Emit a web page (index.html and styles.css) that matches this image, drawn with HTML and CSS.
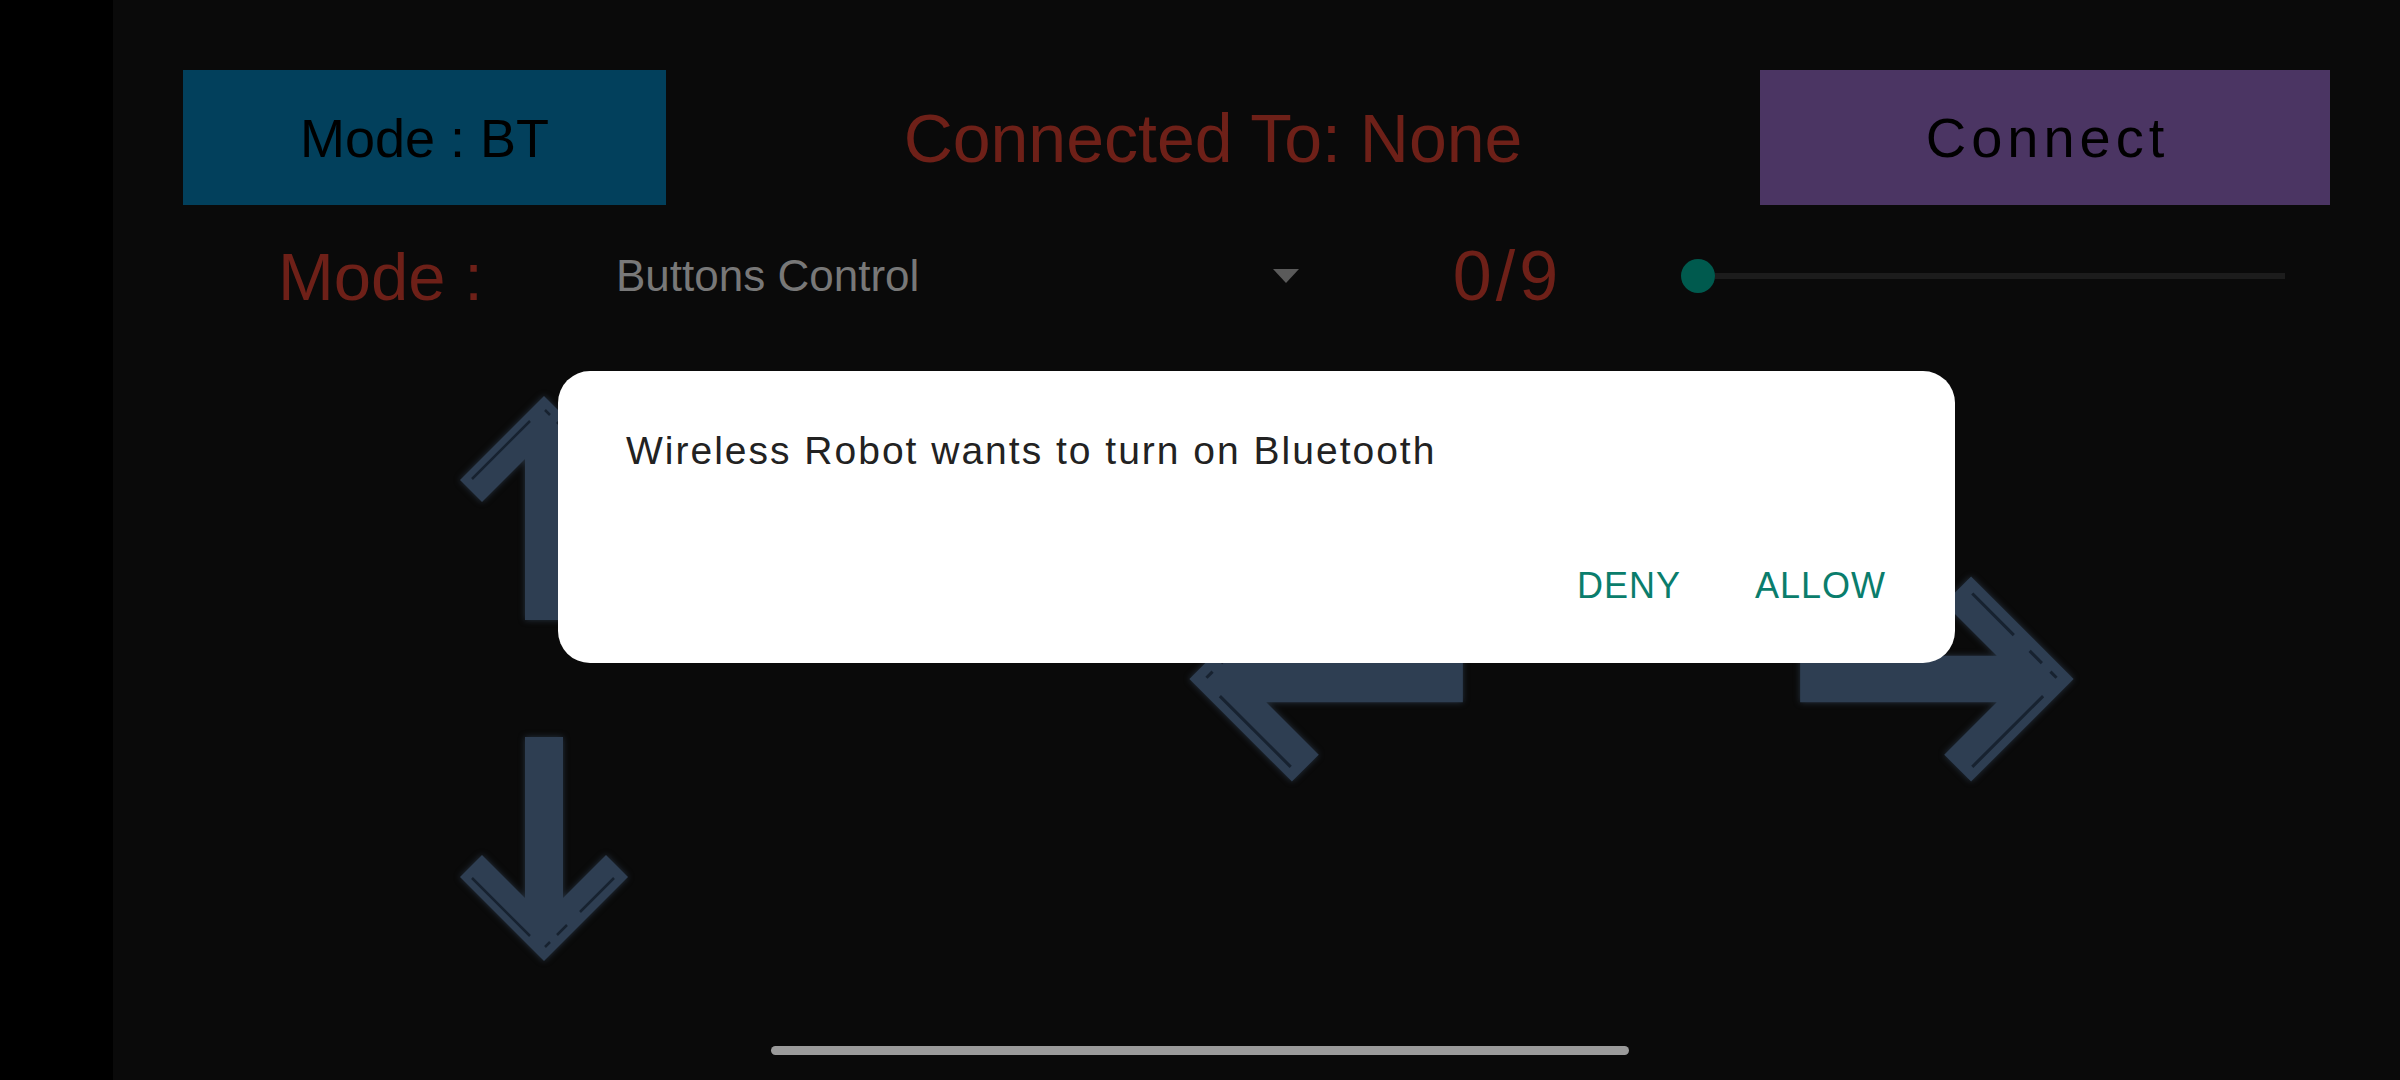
FILE: index.html
```html
<!DOCTYPE html>
<html lang="en">
<head>
<meta charset="utf-8">
<title>Wireless Robot</title>
<link rel="stylesheet" href="styles.css">
</head>
<body>
<div class="screen">
  <div class="cutout"></div>
  <main class="app">
    <div class="top-row">
      <div class="btn btn-mode">Mode : BT</div>
      <div class="status">Connected To: None</div>
      <div class="btn btn-connect">Connect</div>
    </div>
    <div class="mode-row">
      <div class="mode-label">Mode :</div>
      <div class="spinner">
        <span class="spinner-text">Buttons Control</span>
        <span class="spinner-caret"></span>
      </div>
      <div class="speed">0/9</div>
      <div class="seekbar">
        <span class="thumb"></span>
        <span class="track"></span>
      </div>
    </div>
    <div class="pad">
      <svg class="arrow arrow-up" viewBox="0 0 172 225" aria-label="Up">
        <path class="fill" d="M67,0 H105 V161 L148,118 L170,140 L86,224 L2,140 L24,118 L67,161 Z"/>
        <path class="line" d="M14,141 L72,199 M156,141 L122,175 M109,188 L99,198 M92,205 L87,210"/>
      </svg>
      <svg class="arrow arrow-down" viewBox="0 0 172 225" aria-label="Down">
        <path class="fill" d="M67,0 H105 V161 L148,118 L170,140 L86,224 L2,140 L24,118 L67,161 Z"/>
        <path class="line" d="M14,141 L72,199 M156,141 L122,175 M109,188 L99,198 M92,205 L87,210"/>
      </svg>
      <svg class="arrow arrow-left" viewBox="0 0 225 172" aria-label="Left">
        <g transform="translate(0,172) rotate(-90)">
          <path class="fill" d="M67,0 H105 V161 L148,118 L170,140 L86,224 L2,140 L24,118 L67,161 Z"/>
          <path class="line" d="M14,141 L72,199 M156,141 L122,175 M109,188 L99,198 M92,205 L87,210"/>
        </g>
      </svg>
      <svg class="arrow arrow-right" viewBox="0 0 225 172" aria-label="Right">
        <g transform="translate(0,172) rotate(-90)">
          <path class="fill" d="M67,0 H105 V161 L148,118 L170,140 L86,224 L2,140 L24,118 L67,161 Z"/>
          <path class="line" d="M14,141 L72,199 M156,141 L122,175 M109,188 L99,198 M92,205 L87,210"/>
        </g>
      </svg>
    </div>
  </main>
</div>

<div class="scrim">
  <div class="dialog" role="dialog">
    <p class="dialog-msg">Wireless Robot wants to turn on Bluetooth</p>
    <div class="dialog-actions">
      <span class="dialog-btn">DENY</span>
      <span class="dialog-btn">ALLOW</span>
    </div>
  </div>
</div>

<div class="nav-handle"></div>
</body>
</html>
```
FILE: styles.css
```css
* { box-sizing: border-box; }

html, body {
  margin: 0;
  padding: 0;
  width: 2400px;
  height: 1080px;
  overflow: hidden;
  background: #000;
  font-family: "Liberation Sans", Arial, sans-serif;
}

.screen {
  display: flex;
  width: 2400px;
  height: 1080px;
}

.cutout {
  width: 113px;
  flex: none;
  background: #000;
}

.app {
  flex: 1;
  background: #0a0a0a;
  padding: 70px 70px 0 70px;
  display: flex;
  flex-direction: column;
}

/* top row */
.top-row {
  display: grid;
  grid-template-columns: 483px 1fr 570px;
  height: 135px;
  align-items: center;
}

.btn {
  height: 135px;
  display: flex;
  align-items: center;
  justify-content: center;
  color: #000;
  font-size: 54px;
}

.btn-mode {
  background: #02405c;
}

.btn-connect {
  background: #4b3563;
  font-size: 56px;
  letter-spacing: 5px;
  padding-left: 5px;
}

.status {
  text-align: center;
  color: #6e2018;
  font-size: 68px;
}

/* mode row */
.mode-row {
  display: grid;
  grid-template-columns: 417px 730px 351px 1fr;
  height: 142px;
  align-items: center;
}

.mode-label {
  padding-left: 95px;
  color: #6e2018;
  font-size: 67px;
}

.spinner {
  display: flex;
  align-items: center;
  justify-content: space-between;
  padding: 0 31px 0 16px;
}

.spinner-text {
  color: #787878;
  font-size: 44px;
}

.spinner-caret {
  width: 0;
  height: 0;
  border-left: 13px solid transparent;
  border-right: 13px solid transparent;
  border-top: 14px solid #5a5a5a;
}

.speed {
  text-align: center;
  color: #6e2018;
  font-size: 70px;
  letter-spacing: 4px;
  padding-left: 4px;
}

.seekbar {
  display: flex;
  align-items: center;
  padding-right: 45px;
}

.thumb {
  width: 34px;
  height: 34px;
  border-radius: 50%;
  background: #005a4e;
  flex: none;
}

.track {
  flex: 1;
  height: 6px;
  background: #1c1c1c;
}

/* direction pad */
.pad {
  display: grid;
  grid-template-columns: 172px 558px 275px 337px 275px;
  grid-template-rows: 225px 117px 225px;
  margin-left: 275px;
  padding-top: 48px;
}

.arrow {
  display: block;
  overflow: visible;
  filter: drop-shadow(0 0 3px rgba(60, 82, 108, 0.55));
}

.arrow .fill { fill: #2e3e52; }
.arrow .line {
  fill: none;
  stroke: #172230;
  stroke-width: 2.5;
}

.arrow-up {
  grid-column: 1;
  grid-row: 1;
  width: 172px;
  height: 225px;
  transform: scaleY(-1);
}

.arrow-down {
  grid-column: 1;
  grid-row: 3;
  width: 172px;
  height: 225px;
}

.arrow-left {
  grid-column: 3;
  grid-row: 1 / 4;
  width: 275px;
  height: 210px;
  margin-top: 179px;
  transform: scaleX(-1);
}

.arrow-right {
  grid-column: 5;
  grid-row: 1 / 4;
  width: 275px;
  height: 210px;
  margin-top: 179px;
}

/* dialog overlay */
.scrim {
  position: fixed;
  inset: 0;
  display: flex;
  justify-content: center;
  align-items: flex-start;
  padding: 371px 0 0 113px;
}

.dialog {
  width: 1397px;
  height: 292px;
  background: #fff;
  border-radius: 32px;
  padding: 57px 69px 0 68px;
  display: flex;
  flex-direction: column;
}

.dialog-msg {
  margin: 0;
  font-size: 39px;
  line-height: 45px;
  letter-spacing: 2px;
  color: #222;
}

.dialog-actions {
  margin-top: 92px;
  display: flex;
  justify-content: flex-end;
  gap: 74px;
}

.dialog-btn {
  font-size: 36px;
  line-height: 41px;
  letter-spacing: 1px;
  color: #0a7d6c;
}

/* system nav handle */
.nav-handle {
  position: fixed;
  left: 771px;
  top: 1046px;
  width: 858px;
  height: 9px;
  border-radius: 5px;
  background: #9b9b9b;
}
```
